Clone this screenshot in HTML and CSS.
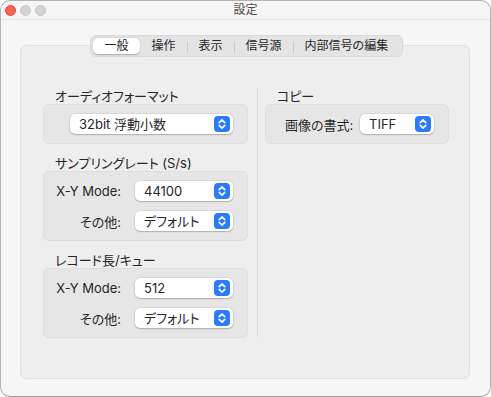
FILE: index.html
```html
<!DOCTYPE html>
<html lang="ja">
<head>
    <meta charset="UTF-8">
    <title>設定</title>
    <link rel="stylesheet" href="styles.css">
</head>
<body>
    <div class="window">
        <!-- タイトルバー -->
        <div class="titlebar">
            <div class="lights">
                <span class="light close"></span>
                <span class="light"></span>
                <span class="light"></span>
            </div>
            <div class="title">設定</div>
        </div>

        <div class="content">
            <!-- タブ -->
            <div class="tabs">
                <div class="tab active">一般</div>
                <div class="tab">操作</div>
                <div class="tab sep">表示</div>
                <div class="tab sep">信号源</div>
                <div class="tab sep">内部信号の編集</div>
            </div>

            <div class="panel">
                <div class="column">
                    <section class="group">
                        <div class="group-title">オーディオフォーマット</div>
                        <div class="group-box single">
                            <div class="popup">
                                <span class="popup-text">32bit 浮動小数</span>
                                <svg class="stepper" viewBox="0 0 16 16"><path d="M5.2 6.6 8 3.9l2.8 2.7M5.2 9.4 8 12.1l2.8-2.7"/></svg>
                            </div>
                        </div>
                    </section>

                    <section class="group">
                        <div class="group-title">サンプリングレート (S/s)</div>
                        <div class="group-box rows">
                            <div class="row-label">X-Y Mode:</div>
                            <div class="popup">
                                <span class="popup-text">44100</span>
                                <svg class="stepper" viewBox="0 0 16 16"><path d="M5.2 6.6 8 3.9l2.8 2.7M5.2 9.4 8 12.1l2.8-2.7"/></svg>
                            </div>
                            <div class="row-label">その他:</div>
                            <div class="popup">
                                <span class="popup-text">デフォルト</span>
                                <svg class="stepper" viewBox="0 0 16 16"><path d="M5.2 6.6 8 3.9l2.8 2.7M5.2 9.4 8 12.1l2.8-2.7"/></svg>
                            </div>
                        </div>
                    </section>

                    <section class="group">
                        <div class="group-title">レコード長/キュー</div>
                        <div class="group-box rows">
                            <div class="row-label">X-Y Mode:</div>
                            <div class="popup">
                                <span class="popup-text">512</span>
                                <svg class="stepper" viewBox="0 0 16 16"><path d="M5.2 6.6 8 3.9l2.8 2.7M5.2 9.4 8 12.1l2.8-2.7"/></svg>
                            </div>
                            <div class="row-label">その他:</div>
                            <div class="popup">
                                <span class="popup-text">デフォルト</span>
                                <svg class="stepper" viewBox="0 0 16 16"><path d="M5.2 6.6 8 3.9l2.8 2.7M5.2 9.4 8 12.1l2.8-2.7"/></svg>
                            </div>
                        </div>
                    </section>
                </div>

                <div class="divider"></div>

                <div class="column">
                    <section class="group">
                        <div class="group-title">コピー</div>
                        <div class="group-box rows copy">
                            <div class="row-label">画像の書式:</div>
                            <div class="popup">
                                <span class="popup-text">TIFF</span>
                                <svg class="stepper" viewBox="0 0 16 16"><path d="M5.2 6.6 8 3.9l2.8 2.7M5.2 9.4 8 12.1l2.8-2.7"/></svg>
                            </div>
                        </div>
                    </section>
                </div>
            </div>
        </div>
    </div>
</body>
</html>
```

FILE: styles.css
```css
/* 基本 */
* {
    margin: 0;
    padding: 0;
    box-sizing: border-box;
}

body {
    background-color: #ffffff;
    font-family: 'Inter', 'Noto Sans CJK JP', sans-serif;
    font-size: 13px;
    font-feature-settings: "palt"; /* かなを詰める */
    color: #262626;
}

/* ウィンドウ */
.window {
    width: 491px;
    height: 397px;
    background-color: #f6f6f6;
    border: 1px solid #b4b4b4;
    border-bottom-color: #9a9a9a;
    border-radius: 10px;
    overflow: hidden;
}

.titlebar {
    position: relative;
    height: 19px;
    border-bottom: 1px solid #e2e2e2;
    display: flex;
    align-items: center;
    justify-content: center;
}

.lights {
    position: absolute;
    left: 4px;
    top: 4px;
    display: flex;
    gap: 4px;
}

.light {
    width: 11px;
    height: 11px;
    border-radius: 50%;
    background-color: #d4d4d4;
    border: 0.5px solid #c4c4c4;
}

.light.close {
    background-color: #ff5f57;
    border-color: #e2463f;
}

.title {
    font-size: 12px;
    color: #4a4a4a;
    line-height: 18px;
}

/* タブ */
.content {
    padding: 15px 20px 0 19px;
}

.tabs {
    position: relative;
    z-index: 1;
    display: flex;
    width: max-content;
    height: 22px;
    margin: 0 auto -12px 70px;
    padding: 2px;
    background-color: #e4e4e4;
    border: 1px solid #d9d9d9;
    border-radius: 6px;
}

.tab {
    position: relative;
    display: flex;
    align-items: center;
    padding: 0 11.5px;
    font-size: 12px;
    line-height: 18px;
}

.tab.active {
    background-color: #ffffff;
    border-radius: 5px;
    box-shadow: 0 0.5px 1.5px rgba(0, 0, 0, 0.25);
}

.tab.sep::before {
    content: '';
    position: absolute;
    left: 0;
    top: 4px;
    width: 1px;
    height: 11px;
    background-color: #cbcbcb;
}

/* パネル */
.panel {
    display: grid;
    grid-template-columns: 205px 17px 184px;
    height: 334px;
    padding: 43px 0 0 22px;
    background-color: #eeeeee;
    border: 1px solid #e2e2e2;
    border-radius: 6px;
}

.column {
    display: flex;
    flex-direction: column;
    gap: 12px;
}

.divider {
    width: 1px;
    height: 249px;
    margin: -1px 0 0 9px;
    background-color: #d9d9d9;
}

.group-title {
    padding-left: 12px;
    line-height: 15px;
}

.group-box {
    background-color: #e6e6e6;
    border: 1px solid #dedede;
    border-radius: 6px;
}

.group-box.single {
    padding: 9px 14px 9px 26px;
}

.group-box.rows {
    display: grid;
    grid-template-columns: 77px 98px;
    column-gap: 14px;
    row-gap: 10px;
    align-items: center;
    padding: 9px 14px 9px 0;
}

.group-box.copy {
    grid-template-columns: 64px 74px;
    column-gap: 11px;
    padding: 9px 14px 9px 19px;
}

.row-label {
    text-align: right;
    white-space: nowrap;
}

/* ポップアップボタン */
.popup {
    display: flex;
    align-items: center;
    justify-content: space-between;
    height: 20px;
    padding: 0 3px 0 9px;
    background-color: #ffffff;
    border-radius: 5px;
    box-shadow: 0 0 0 0.5px rgba(0, 0, 0, 0.12), 0 1px 1.5px rgba(0, 0, 0, 0.2);
}

.popup-text {
    line-height: 20px;
    white-space: nowrap;
}

.stepper {
    width: 16px;
    height: 16px;
    background-color: #2a7cf6;
    border-radius: 4px;
    fill: none;
    stroke: #ffffff;
    stroke-width: 1.6;
    stroke-linecap: round;
    stroke-linejoin: round;
}
```
